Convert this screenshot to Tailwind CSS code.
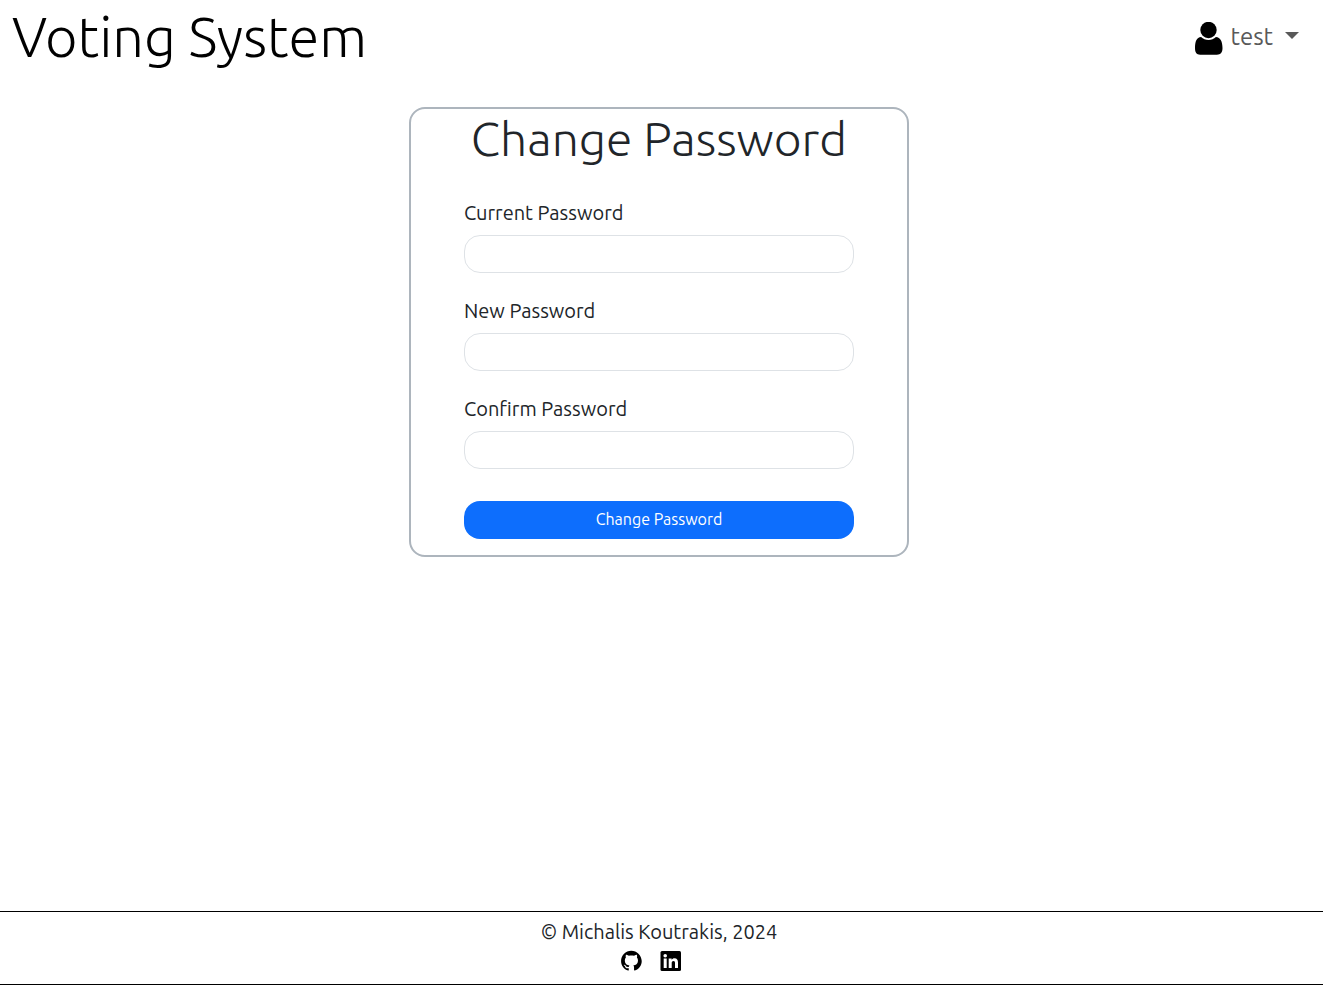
<!DOCTYPE html>
<html lang="en">
<head>
<meta charset="utf-8">
<meta name="viewport" content="width=device-width, initial-scale=1">
<title>Voting System</title>
<script src="https://cdn.jsdelivr.net/npm/@tailwindcss/browser@4"></script>
</head>
<body class="flex min-h-screen flex-col bg-white font-['Ubuntu','Noto_Sans',sans-serif] text-[#212529]">
  <header class="flex items-start justify-between pr-6 pl-3">
    <a href="#" class="text-[56px] leading-[74px] font-light text-black">Voting System</a>
    <button type="button" class="mt-[17px] flex h-10 items-center text-2xl text-[#595959]">
      <svg class="mt-1 mr-2 h-[34px] w-7 text-black" viewBox="0 0.5 28 34" fill="currentColor" aria-hidden="true">
        <circle cx="13.500" cy="8.5" r="8.2"/>
        <path d="M6.100 15.6C1.500 15.8 0 20.4 0 26.6C0 31 1.500 33.2 5.100 33.2H21.900C25.700 33.200 27.500 31 27.500 26.600C27.500 20.400 25.500 15.800 20.900 15.600C18.900 17.500 16.300 18.600 13.500 18.600C10.700 18.600 8.100 17.500 6.100 15.600Z"/>
      </svg>
      <span>test</span>
      <svg class="mb-1 ml-3 h-[7px] w-[14px]" viewBox="0 0 14 7" fill="currentColor" aria-hidden="true"><path d="M0 0H14L7 7Z"/></svg>
    </button>
  </header>

  <main class="flex grow items-start justify-center pt-[33px] pr-[5px]">
    <form class="w-full max-w-[500px] rounded-2xl border-2 border-[#adb5bd] px-[53px] pb-4">
      <h1 class="text-center text-5xl leading-[58px] font-light whitespace-nowrap">Change Password</h1>
      <div class="mt-[30px] flex flex-col gap-[22px]">
        <div>
          <label for="current" class="mb-1.5 block text-xl leading-8">Current Password</label>
          <input id="current" type="password" class="block h-[38px] w-full rounded-2xl border border-[#dee2e6] bg-white px-3 outline-none">
        </div>
        <div>
          <label for="new" class="mb-1.5 block text-xl leading-8">New Password</label>
          <input id="new" type="password" class="block h-[38px] w-full rounded-2xl border border-[#dee2e6] bg-white px-3 outline-none">
        </div>
        <div>
          <label for="confirm" class="mb-1.5 block text-xl leading-8">Confirm Password</label>
          <input id="confirm" type="password" class="block h-[38px] w-full rounded-2xl border border-[#dee2e6] bg-white px-3 outline-none">
        </div>
      </div>
      <button type="submit" class="mt-8 block h-[38px] w-full rounded-2xl bg-[#0d6efd] pb-0.5 text-base text-white">Change Password</button>
    </form>
  </main>

  <footer class="border-y border-black pr-[5px] pt-1 pb-3 text-center">
    <p class="text-xl leading-8">© Michalis Koutrakis, 2024</p>
    <div class="mt-[2px] flex justify-center gap-[18px] pr-4 text-black">
      <a href="#" aria-label="GitHub"><svg class="size-[22px]" viewBox="-0.6 0 24.6 24.6" fill="currentColor"><path d="M12 .8C5.700.8.600 5.900.600 12.200c0 5 3.300 9.300 7.800 10.800.600.100.800-.200.800-.600v-2.100c-3.200.700-3.900-1.400-3.900-1.400-.500-1.300-1.300-1.700-1.300-1.700-1-.700.100-.700.100-.700 1.200.100 1.800 1.200 1.800 1.200 1 1.800 2.700 1.300 3.400 1 .100-.700.400-1.300.700-1.500-2.500-.300-5.200-1.300-5.200-5.700 0-1.200.400-2.300 1.200-3.100-.100-.300-.500-1.500.100-3.100 0 0 1-.300 3.200 1.200.900-.300 1.900-.400 2.900-.400s2 .100 2.900.400c2.200-1.500 3.100-1.200 3.100-1.200.600 1.600.200 2.800.100 3.100.700.800 1.200 1.800 1.200 3.100 0 4.400-2.700 5.400-5.200 5.600.400.400.800 1.100.800 2.100v3.200c0 .300.200.700.800.600 4.500-1.500 7.800-5.800 7.800-10.800C23.400 5.900 18.300.8 12 .8Z"/></svg></a>
      <a href="#" aria-label="LinkedIn"><svg class="size-[22px]" viewBox="0 0 22 22"><rect x="0.500" y="1" width="20.500" height="20" rx="1.500" fill="currentColor"/><g fill="#fff"><circle cx="5.200" cy="5.700" r="1.800"/><path d="M3.700 8.500H6.700V18H3.700ZM8.700 8.500H11.600V9.800C12.200 8.900 13.200 8.300 14.500 8.300C17 8.300 18 9.900 18 12.500V18H15V13.100C15 11.800 14.700 10.900 13.400 10.900C12.100 10.900 11.700 11.900 11.700 13.100V18H8.700Z"/></g></svg></a>
    </div>
  </footer>
</body>
</html>
